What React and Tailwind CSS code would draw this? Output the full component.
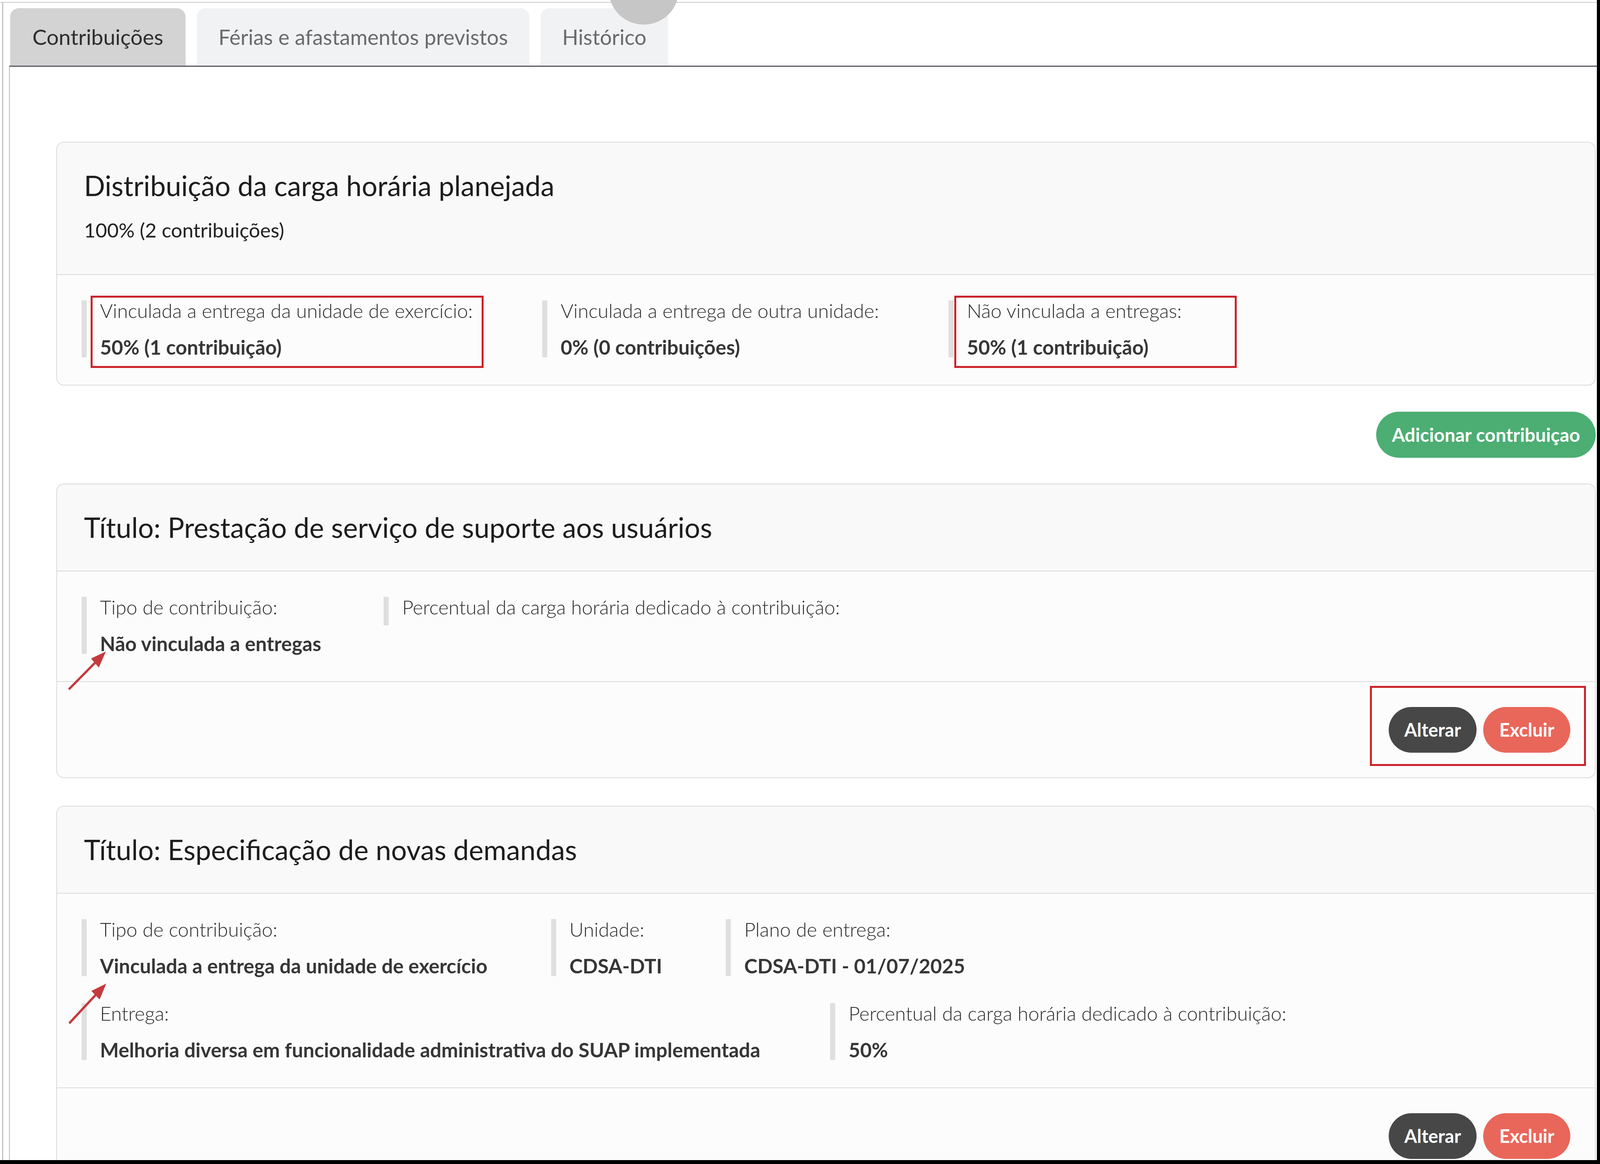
import React from "react";

const tabs = [
  { label: "Contribuições", active: true },
  { label: "Férias e afastamentos previstos" },
  { label: "Histórico" },
];

function Field({ label, value, children }) {
  return (
    <div className="relative border-l-[13px] border-[#dfdfe0] pl-[34px]">
      <div className="h-[73px] text-[50px] font-light leading-[53px] text-[#2b2b2b] whitespace-nowrap">{label}</div>
      {value && (
        <div className="mt-[20px] text-[51px] font-bold leading-[53px] text-[#363636] whitespace-nowrap">{value}</div>
      )}
      {children}
    </div>
  );
}

function Actions({ marked }) {
  return (
    <div className="relative flex gap-[17px]">
      <button className="h-[117px] px-[40px] rounded-full bg-[#474747] text-white text-[47px] font-bold leading-none">
        Alterar
      </button>
      <button className="h-[117px] px-[41px] rounded-full bg-[#e9675a] text-white text-[47px] font-bold leading-none">
        Excluir
      </button>
      {/* destaque vermelho */}
      {marked && (
        <div className="absolute left-[-48px] top-[-54px] w-[553px] h-[205px] border-[5px] border-[#cc2229]" />
      )}
    </div>
  );
}

function Card({ title, subtitle, children, footer }) {
  return (
    <div className="rounded-[20px] border-[2px] border-[#dadadf] bg-[#fcfcfc] overflow-hidden">
      <div className={subtitle ? "bg-[#f9f9fa] pl-[69px] pt-[72px] pb-[86px]" : "bg-[#f9f9fa] pl-[69px] pt-[72px] pb-[74px]"}>
        <h2 className="text-[71px] leading-[75px] text-[#1d1d1d] whitespace-nowrap">{title}</h2>
        {subtitle && <p className="mt-[50px] text-[51px] leading-[54px] text-[#222]">{subtitle}</p>}
      </div>
      <div className="border-t-[2px] border-[#dadadf] pl-[63px] pt-[65px] pb-[70px]">{children}</div>
      {footer && (
        <div className="border-t-[2px] border-[#dadadf] flex justify-end pr-[63px] pt-[64px] pb-[63px]">
          {footer}
        </div>
      )}
    </div>
  );
}

export default function App() {
  return (
    <div className="w-full h-[2980px] bg-black pr-[8px] pb-[10px] overflow-hidden font-['Lato',_'Open_Sans',_sans-serif]">
      <div className="relative h-full bg-white pt-[5px] overflow-hidden">
        <div className="h-full border-t-[2px] border-[#cbcbd0] flex">
          <div className="w-[6px]" />
          <div className="w-[17px] border-l-[2px] border-[#a9a9a9]" />
          <div className="flex-1 flex flex-col">
            {/* abas */}
            <div className="flex gap-[29px] pl-[3px] pt-[14px]">
              {tabs.map((t) => (
                <div
                  key={t.label}
                  className={
                    t.active
                      ? "h-[147px] px-[57px] flex items-center rounded-t-[22px] bg-[#d3d3d3] text-[55px] text-[#2e2e2e]"
                      : "h-[147px] px-[55px] flex items-center rounded-t-[22px] bg-[#f1f2f3] text-[54px] text-[#6a6a6e]"
                  }
                >
                  {t.label}
                </div>
              ))}
            </div>

            <div className="flex-1 border-t-[3px] border-l-[2px] border-t-[#575a61] border-l-[#bcbcbc] pl-[119px] pr-[3px] pt-[192px] flex flex-col">
              <Card title="Distribuição da carga horária planejada" subtitle="100% (2 contribuições)">
                <div className="flex gap-[178px] items-start">
                  <Field label="Vinculada a entrega da unidade de exercício:" value="50% (1 contribuição)">
                    <div className="absolute left-[10px] top-[-12px] w-[1006px] h-[185px] border-[5px] border-[#cc2229]" />
                  </Field>
                  <Field label="Vinculada a entrega de outra unidade:" value="0% (0 contribuições)" />
                  <Field label="Não vinculada a entregas:" value="50% (1 contribuição)">
                    <div className="absolute left-[2px] top-[-12px] w-[723px] h-[185px] border-[5px] border-[#cc2229]" />
                  </Field>
                </div>
              </Card>

              <div className="flex justify-end mt-[67px] mb-[66px]">
                <button className="h-[118px] px-[40px] rounded-full bg-[#4cae73] text-white text-[48px] font-bold leading-none whitespace-nowrap">
                  Adicionar contribuiçao
                </button>
              </div>

              <Card title="Título: Prestação de serviço de suporte aos usuários" footer={<Actions marked />}>
                <div className="flex gap-[160px] items-start">
                  <Field label="Tipo de contribuição:" value="Não vinculada a entregas" />
                  <Field label="Percentual da carga horária dedicado à contribuição:" />
                </div>
              </Card>

              <div className="mt-[71px]">
                <Card title="Título: Especificação de novas demandas" footer={<Actions />}>
                  <div className="flex flex-col gap-[69px]">
                    <div className="flex gap-[163px] items-start">
                      <Field label="Tipo de contribuição:" value="Vinculada a entrega da unidade de exercício" />
                      <Field label="Unidade:" value="CDSA-DTI" />
                      <Field label="Plano de entrega:" value="CDSA-DTI - 01/07/2025" />
                    </div>
                    <div className="flex gap-[179px] items-start">
                      <Field
                        label="Entrega:"
                        value="Melhoria diversa em funcionalidade administrativa do SUAP implementada"
                      />
                      <Field label="Percentual da carga horária dedicado à contribuição:" value="50%" />
                    </div>
                  </div>
                </Card>
              </div>
            </div>
          </div>
        </div>

        {/* círculo cinza no topo */}
        <div className="absolute left-[1558px] top-[-122px] w-[180px] h-[185px] rounded-full bg-[#c6c6c6]" />

        {/* setas de anotação */}
        <svg className="absolute left-0 top-0 pointer-events-none" width="600" height="2970">
          <line x1="178" y1="1763" x2="243" y2="1697" stroke="#c43a3e" strokeWidth="6" strokeLinecap="round" />
          <polygon points="271,1668 253,1709 233,1686" fill="#c43a3e" />
          <line x1="179" y1="2618" x2="244" y2="2548" stroke="#c43a3e" strokeWidth="6" strokeLinecap="round" />
          <polygon points="272,2518 255,2559 234,2537" fill="#c43a3e" />
        </svg>
      </div>
    </div>
  );
}
